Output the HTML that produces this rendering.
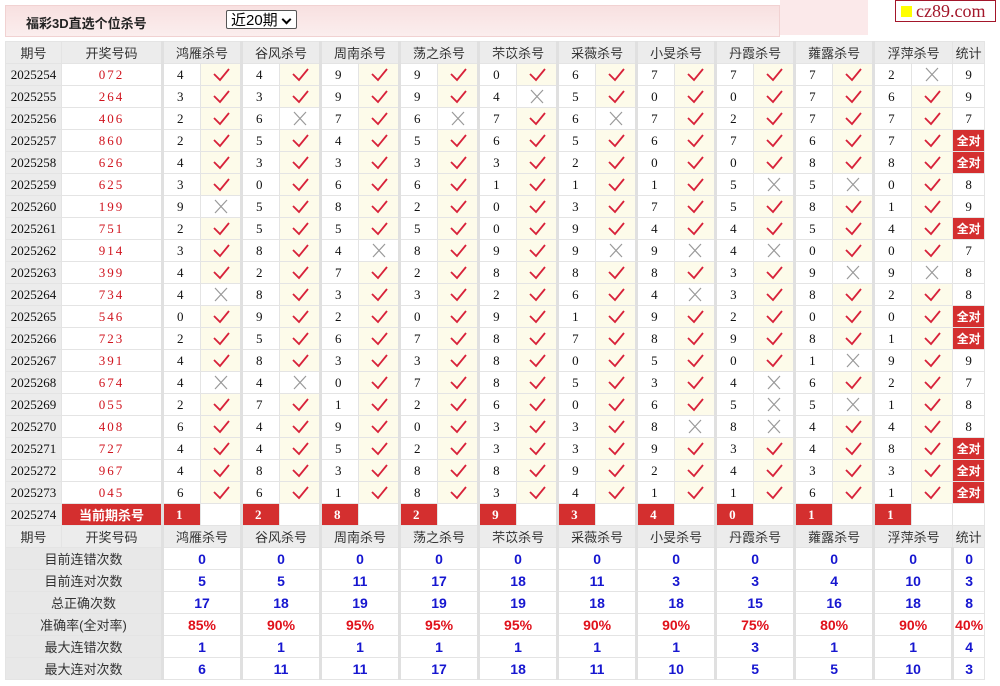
<!DOCTYPE html>
<html><head><meta charset="utf-8">
<style>
body{margin:0;background:#fff;width:1000px;height:686px;overflow:hidden;font-family:"Liberation Serif","Noto Serif CJK SC",serif;}
.top{position:absolute;left:5px;top:5px;width:773px;height:30px;background:linear-gradient(#f8e0e0,#fbeeee);border:1px solid #f1d2d2;}
.top .t{position:absolute;left:20px;top:7px;font:bold 13px "Liberation Sans","Noto Sans CJK SC",sans-serif;color:#222;}
.sel{position:absolute;left:220px;top:4px;height:19px;border:1px solid #555;background:#fff;font:15px "Liberation Sans","Noto Sans CJK SC",sans-serif;line-height:19px;padding-left:4px;box-sizing:border-box;width:71px;border-radius:2px}
.sel:after{content:"";position:absolute;right:6px;top:5px;width:5px;height:5px;border-right:2px solid #000;border-bottom:2px solid #000;transform:rotate(45deg)}
.logo{position:absolute;left:895px;top:0;width:101px;height:22px;border:1px solid #a3162a;background:#fff;color:#a3162a;font:18px "Liberation Serif",serif;line-height:21px;box-sizing:border-box;padding-left:20px;white-space:nowrap;overflow:hidden}
.logo:before{content:"";position:absolute;left:5px;top:5px;width:11px;height:11px;background:#ff0}
.pinkr{position:absolute;left:780px;top:0;width:88px;height:35px;background:#fbe9ea}
table{position:absolute;left:5px;top:41px;border-collapse:collapse;table-layout:fixed;width:979px}
td{height:21px;border:1px solid #e4e4e4;padding:0;font-size:13px;color:#111;white-space:nowrap;overflow:hidden}
.h{background:#ececec;text-align:center;font-family:"Liberation Sans","Noto Sans CJK SC",sans-serif;color:#333}
.q{background:#ececec;text-align:center;font-size:13px}
.k{text-align:center;color:#d0141e;letter-spacing:2px}
.n{border-left:3px solid #e0e0e0;padding-left:13px}
.v{background:#fdfbea;text-align:center}
.x{text-align:center}
td svg{display:block;margin:0 auto;width:20px;height:16px}
.s{text-align:center}
.b{background:#d42f2f;color:#fff;font-weight:bold;text-align:left;padding-left:12px}
.bb{background:#d42f2f;color:#fff;font:bold 13px "Liberation Sans","Noto Sans CJK SC",sans-serif;text-align:center}
.qa{background:#d42f2f;color:#fff;font:bold 12px "Liberation Sans","Noto Sans CJK SC",sans-serif;text-align:center}
.L{background:#e8e8e8;text-align:center;font-family:"Liberation Sans","Noto Sans CJK SC",sans-serif;color:#333}
.B{text-align:center;color:#1616d0;font:bold 14px "Liberation Sans",sans-serif;border-left:3px solid #e0e0e0}
.R{text-align:center;color:#e0101a;font:bold 14px "Liberation Sans",sans-serif;border-left:3px solid #e0e0e0}
.hg{border-left:3px solid #e0e0e0}
</style></head><body>
<svg width="0" height="0" style="position:absolute"><defs>
<symbol id="c" viewBox="0 0 20 16"><path d="M3 7 L9 13 L18 2" fill="none" stroke="#d8223a" stroke-width="1.8"/></symbol>
<symbol id="w" viewBox="0 0 20 16"><path d="M4 1 L16 14 M16 1 L4 14" fill="none" stroke="#999" stroke-width="1.2"/></symbol>
</defs></svg>
<div class="top"><span class="t">福彩3D直选个位杀号</span><div class="sel">近20期</div></div>
<div class="pinkr"></div>
<div class="logo">cz89.com</div>
<table>
<colgroup><col style="width:56px"><col style="width:101px">
<col style="width:38px"><col style="width:41px"><col style="width:38px"><col style="width:41px"><col style="width:38px"><col style="width:41px"><col style="width:38px"><col style="width:41px"><col style="width:38px"><col style="width:41px"><col style="width:38px"><col style="width:41px"><col style="width:38px"><col style="width:41px"><col style="width:38px"><col style="width:41px"><col style="width:38px"><col style="width:41px"><col style="width:38px"><col style="width:41px"><col style="width:32px"></colgroup>
<tr><td class="h">期号</td><td class="h">开奖号码</td><td class="h hg" colspan="2">鸿雁杀号</td><td class="h hg" colspan="2">谷风杀号</td><td class="h hg" colspan="2">周南杀号</td><td class="h hg" colspan="2">荡之杀号</td><td class="h hg" colspan="2">芣苡杀号</td><td class="h hg" colspan="2">采薇杀号</td><td class="h hg" colspan="2">小旻杀号</td><td class="h hg" colspan="2">丹霞杀号</td><td class="h hg" colspan="2">蕹露杀号</td><td class="h hg" colspan="2">浮萍杀号</td><td class="h">统计</td></tr>
<tr><td class="q">2025254</td><td class="k">072</td><td class="n">4</td><td class="v"><svg><use href="#c"/></svg></td><td class="n">4</td><td class="v"><svg><use href="#c"/></svg></td><td class="n">9</td><td class="v"><svg><use href="#c"/></svg></td><td class="n">9</td><td class="v"><svg><use href="#c"/></svg></td><td class="n">0</td><td class="v"><svg><use href="#c"/></svg></td><td class="n">6</td><td class="v"><svg><use href="#c"/></svg></td><td class="n">7</td><td class="v"><svg><use href="#c"/></svg></td><td class="n">7</td><td class="v"><svg><use href="#c"/></svg></td><td class="n">7</td><td class="v"><svg><use href="#c"/></svg></td><td class="n">2</td><td class="x"><svg><use href="#w"/></svg></td><td class="s">9</td></tr>
<tr><td class="q">2025255</td><td class="k">264</td><td class="n">3</td><td class="v"><svg><use href="#c"/></svg></td><td class="n">3</td><td class="v"><svg><use href="#c"/></svg></td><td class="n">9</td><td class="v"><svg><use href="#c"/></svg></td><td class="n">9</td><td class="v"><svg><use href="#c"/></svg></td><td class="n">4</td><td class="x"><svg><use href="#w"/></svg></td><td class="n">5</td><td class="v"><svg><use href="#c"/></svg></td><td class="n">0</td><td class="v"><svg><use href="#c"/></svg></td><td class="n">0</td><td class="v"><svg><use href="#c"/></svg></td><td class="n">7</td><td class="v"><svg><use href="#c"/></svg></td><td class="n">6</td><td class="v"><svg><use href="#c"/></svg></td><td class="s">9</td></tr>
<tr><td class="q">2025256</td><td class="k">406</td><td class="n">2</td><td class="v"><svg><use href="#c"/></svg></td><td class="n">6</td><td class="x"><svg><use href="#w"/></svg></td><td class="n">7</td><td class="v"><svg><use href="#c"/></svg></td><td class="n">6</td><td class="x"><svg><use href="#w"/></svg></td><td class="n">7</td><td class="v"><svg><use href="#c"/></svg></td><td class="n">6</td><td class="x"><svg><use href="#w"/></svg></td><td class="n">7</td><td class="v"><svg><use href="#c"/></svg></td><td class="n">2</td><td class="v"><svg><use href="#c"/></svg></td><td class="n">7</td><td class="v"><svg><use href="#c"/></svg></td><td class="n">7</td><td class="v"><svg><use href="#c"/></svg></td><td class="s">7</td></tr>
<tr><td class="q">2025257</td><td class="k">860</td><td class="n">2</td><td class="v"><svg><use href="#c"/></svg></td><td class="n">5</td><td class="v"><svg><use href="#c"/></svg></td><td class="n">4</td><td class="v"><svg><use href="#c"/></svg></td><td class="n">5</td><td class="v"><svg><use href="#c"/></svg></td><td class="n">6</td><td class="v"><svg><use href="#c"/></svg></td><td class="n">5</td><td class="v"><svg><use href="#c"/></svg></td><td class="n">6</td><td class="v"><svg><use href="#c"/></svg></td><td class="n">7</td><td class="v"><svg><use href="#c"/></svg></td><td class="n">6</td><td class="v"><svg><use href="#c"/></svg></td><td class="n">7</td><td class="v"><svg><use href="#c"/></svg></td><td class="qa">全对</td></tr>
<tr><td class="q">2025258</td><td class="k">626</td><td class="n">4</td><td class="v"><svg><use href="#c"/></svg></td><td class="n">3</td><td class="v"><svg><use href="#c"/></svg></td><td class="n">3</td><td class="v"><svg><use href="#c"/></svg></td><td class="n">3</td><td class="v"><svg><use href="#c"/></svg></td><td class="n">3</td><td class="v"><svg><use href="#c"/></svg></td><td class="n">2</td><td class="v"><svg><use href="#c"/></svg></td><td class="n">0</td><td class="v"><svg><use href="#c"/></svg></td><td class="n">0</td><td class="v"><svg><use href="#c"/></svg></td><td class="n">8</td><td class="v"><svg><use href="#c"/></svg></td><td class="n">8</td><td class="v"><svg><use href="#c"/></svg></td><td class="qa">全对</td></tr>
<tr><td class="q">2025259</td><td class="k">625</td><td class="n">3</td><td class="v"><svg><use href="#c"/></svg></td><td class="n">0</td><td class="v"><svg><use href="#c"/></svg></td><td class="n">6</td><td class="v"><svg><use href="#c"/></svg></td><td class="n">6</td><td class="v"><svg><use href="#c"/></svg></td><td class="n">1</td><td class="v"><svg><use href="#c"/></svg></td><td class="n">1</td><td class="v"><svg><use href="#c"/></svg></td><td class="n">1</td><td class="v"><svg><use href="#c"/></svg></td><td class="n">5</td><td class="x"><svg><use href="#w"/></svg></td><td class="n">5</td><td class="x"><svg><use href="#w"/></svg></td><td class="n">0</td><td class="v"><svg><use href="#c"/></svg></td><td class="s">8</td></tr>
<tr><td class="q">2025260</td><td class="k">199</td><td class="n">9</td><td class="x"><svg><use href="#w"/></svg></td><td class="n">5</td><td class="v"><svg><use href="#c"/></svg></td><td class="n">8</td><td class="v"><svg><use href="#c"/></svg></td><td class="n">2</td><td class="v"><svg><use href="#c"/></svg></td><td class="n">0</td><td class="v"><svg><use href="#c"/></svg></td><td class="n">3</td><td class="v"><svg><use href="#c"/></svg></td><td class="n">7</td><td class="v"><svg><use href="#c"/></svg></td><td class="n">5</td><td class="v"><svg><use href="#c"/></svg></td><td class="n">8</td><td class="v"><svg><use href="#c"/></svg></td><td class="n">1</td><td class="v"><svg><use href="#c"/></svg></td><td class="s">9</td></tr>
<tr><td class="q">2025261</td><td class="k">751</td><td class="n">2</td><td class="v"><svg><use href="#c"/></svg></td><td class="n">5</td><td class="v"><svg><use href="#c"/></svg></td><td class="n">5</td><td class="v"><svg><use href="#c"/></svg></td><td class="n">5</td><td class="v"><svg><use href="#c"/></svg></td><td class="n">0</td><td class="v"><svg><use href="#c"/></svg></td><td class="n">9</td><td class="v"><svg><use href="#c"/></svg></td><td class="n">4</td><td class="v"><svg><use href="#c"/></svg></td><td class="n">4</td><td class="v"><svg><use href="#c"/></svg></td><td class="n">5</td><td class="v"><svg><use href="#c"/></svg></td><td class="n">4</td><td class="v"><svg><use href="#c"/></svg></td><td class="qa">全对</td></tr>
<tr><td class="q">2025262</td><td class="k">914</td><td class="n">3</td><td class="v"><svg><use href="#c"/></svg></td><td class="n">8</td><td class="v"><svg><use href="#c"/></svg></td><td class="n">4</td><td class="x"><svg><use href="#w"/></svg></td><td class="n">8</td><td class="v"><svg><use href="#c"/></svg></td><td class="n">9</td><td class="v"><svg><use href="#c"/></svg></td><td class="n">9</td><td class="x"><svg><use href="#w"/></svg></td><td class="n">9</td><td class="x"><svg><use href="#w"/></svg></td><td class="n">4</td><td class="x"><svg><use href="#w"/></svg></td><td class="n">0</td><td class="v"><svg><use href="#c"/></svg></td><td class="n">0</td><td class="v"><svg><use href="#c"/></svg></td><td class="s">7</td></tr>
<tr><td class="q">2025263</td><td class="k">399</td><td class="n">4</td><td class="v"><svg><use href="#c"/></svg></td><td class="n">2</td><td class="v"><svg><use href="#c"/></svg></td><td class="n">7</td><td class="v"><svg><use href="#c"/></svg></td><td class="n">2</td><td class="v"><svg><use href="#c"/></svg></td><td class="n">8</td><td class="v"><svg><use href="#c"/></svg></td><td class="n">8</td><td class="v"><svg><use href="#c"/></svg></td><td class="n">8</td><td class="v"><svg><use href="#c"/></svg></td><td class="n">3</td><td class="v"><svg><use href="#c"/></svg></td><td class="n">9</td><td class="x"><svg><use href="#w"/></svg></td><td class="n">9</td><td class="x"><svg><use href="#w"/></svg></td><td class="s">8</td></tr>
<tr><td class="q">2025264</td><td class="k">734</td><td class="n">4</td><td class="x"><svg><use href="#w"/></svg></td><td class="n">8</td><td class="v"><svg><use href="#c"/></svg></td><td class="n">3</td><td class="v"><svg><use href="#c"/></svg></td><td class="n">3</td><td class="v"><svg><use href="#c"/></svg></td><td class="n">2</td><td class="v"><svg><use href="#c"/></svg></td><td class="n">6</td><td class="v"><svg><use href="#c"/></svg></td><td class="n">4</td><td class="x"><svg><use href="#w"/></svg></td><td class="n">3</td><td class="v"><svg><use href="#c"/></svg></td><td class="n">8</td><td class="v"><svg><use href="#c"/></svg></td><td class="n">2</td><td class="v"><svg><use href="#c"/></svg></td><td class="s">8</td></tr>
<tr><td class="q">2025265</td><td class="k">546</td><td class="n">0</td><td class="v"><svg><use href="#c"/></svg></td><td class="n">9</td><td class="v"><svg><use href="#c"/></svg></td><td class="n">2</td><td class="v"><svg><use href="#c"/></svg></td><td class="n">0</td><td class="v"><svg><use href="#c"/></svg></td><td class="n">9</td><td class="v"><svg><use href="#c"/></svg></td><td class="n">1</td><td class="v"><svg><use href="#c"/></svg></td><td class="n">9</td><td class="v"><svg><use href="#c"/></svg></td><td class="n">2</td><td class="v"><svg><use href="#c"/></svg></td><td class="n">0</td><td class="v"><svg><use href="#c"/></svg></td><td class="n">0</td><td class="v"><svg><use href="#c"/></svg></td><td class="qa">全对</td></tr>
<tr><td class="q">2025266</td><td class="k">723</td><td class="n">2</td><td class="v"><svg><use href="#c"/></svg></td><td class="n">5</td><td class="v"><svg><use href="#c"/></svg></td><td class="n">6</td><td class="v"><svg><use href="#c"/></svg></td><td class="n">7</td><td class="v"><svg><use href="#c"/></svg></td><td class="n">8</td><td class="v"><svg><use href="#c"/></svg></td><td class="n">7</td><td class="v"><svg><use href="#c"/></svg></td><td class="n">8</td><td class="v"><svg><use href="#c"/></svg></td><td class="n">9</td><td class="v"><svg><use href="#c"/></svg></td><td class="n">8</td><td class="v"><svg><use href="#c"/></svg></td><td class="n">1</td><td class="v"><svg><use href="#c"/></svg></td><td class="qa">全对</td></tr>
<tr><td class="q">2025267</td><td class="k">391</td><td class="n">4</td><td class="v"><svg><use href="#c"/></svg></td><td class="n">8</td><td class="v"><svg><use href="#c"/></svg></td><td class="n">3</td><td class="v"><svg><use href="#c"/></svg></td><td class="n">3</td><td class="v"><svg><use href="#c"/></svg></td><td class="n">8</td><td class="v"><svg><use href="#c"/></svg></td><td class="n">0</td><td class="v"><svg><use href="#c"/></svg></td><td class="n">5</td><td class="v"><svg><use href="#c"/></svg></td><td class="n">0</td><td class="v"><svg><use href="#c"/></svg></td><td class="n">1</td><td class="x"><svg><use href="#w"/></svg></td><td class="n">9</td><td class="v"><svg><use href="#c"/></svg></td><td class="s">9</td></tr>
<tr><td class="q">2025268</td><td class="k">674</td><td class="n">4</td><td class="x"><svg><use href="#w"/></svg></td><td class="n">4</td><td class="x"><svg><use href="#w"/></svg></td><td class="n">0</td><td class="v"><svg><use href="#c"/></svg></td><td class="n">7</td><td class="v"><svg><use href="#c"/></svg></td><td class="n">8</td><td class="v"><svg><use href="#c"/></svg></td><td class="n">5</td><td class="v"><svg><use href="#c"/></svg></td><td class="n">3</td><td class="v"><svg><use href="#c"/></svg></td><td class="n">4</td><td class="x"><svg><use href="#w"/></svg></td><td class="n">6</td><td class="v"><svg><use href="#c"/></svg></td><td class="n">2</td><td class="v"><svg><use href="#c"/></svg></td><td class="s">7</td></tr>
<tr><td class="q">2025269</td><td class="k">055</td><td class="n">2</td><td class="v"><svg><use href="#c"/></svg></td><td class="n">7</td><td class="v"><svg><use href="#c"/></svg></td><td class="n">1</td><td class="v"><svg><use href="#c"/></svg></td><td class="n">2</td><td class="v"><svg><use href="#c"/></svg></td><td class="n">6</td><td class="v"><svg><use href="#c"/></svg></td><td class="n">0</td><td class="v"><svg><use href="#c"/></svg></td><td class="n">6</td><td class="v"><svg><use href="#c"/></svg></td><td class="n">5</td><td class="x"><svg><use href="#w"/></svg></td><td class="n">5</td><td class="x"><svg><use href="#w"/></svg></td><td class="n">1</td><td class="v"><svg><use href="#c"/></svg></td><td class="s">8</td></tr>
<tr><td class="q">2025270</td><td class="k">408</td><td class="n">6</td><td class="v"><svg><use href="#c"/></svg></td><td class="n">4</td><td class="v"><svg><use href="#c"/></svg></td><td class="n">9</td><td class="v"><svg><use href="#c"/></svg></td><td class="n">0</td><td class="v"><svg><use href="#c"/></svg></td><td class="n">3</td><td class="v"><svg><use href="#c"/></svg></td><td class="n">3</td><td class="v"><svg><use href="#c"/></svg></td><td class="n">8</td><td class="x"><svg><use href="#w"/></svg></td><td class="n">8</td><td class="x"><svg><use href="#w"/></svg></td><td class="n">4</td><td class="v"><svg><use href="#c"/></svg></td><td class="n">4</td><td class="v"><svg><use href="#c"/></svg></td><td class="s">8</td></tr>
<tr><td class="q">2025271</td><td class="k">727</td><td class="n">4</td><td class="v"><svg><use href="#c"/></svg></td><td class="n">4</td><td class="v"><svg><use href="#c"/></svg></td><td class="n">5</td><td class="v"><svg><use href="#c"/></svg></td><td class="n">2</td><td class="v"><svg><use href="#c"/></svg></td><td class="n">3</td><td class="v"><svg><use href="#c"/></svg></td><td class="n">3</td><td class="v"><svg><use href="#c"/></svg></td><td class="n">9</td><td class="v"><svg><use href="#c"/></svg></td><td class="n">3</td><td class="v"><svg><use href="#c"/></svg></td><td class="n">4</td><td class="v"><svg><use href="#c"/></svg></td><td class="n">8</td><td class="v"><svg><use href="#c"/></svg></td><td class="qa">全对</td></tr>
<tr><td class="q">2025272</td><td class="k">967</td><td class="n">4</td><td class="v"><svg><use href="#c"/></svg></td><td class="n">8</td><td class="v"><svg><use href="#c"/></svg></td><td class="n">3</td><td class="v"><svg><use href="#c"/></svg></td><td class="n">8</td><td class="v"><svg><use href="#c"/></svg></td><td class="n">8</td><td class="v"><svg><use href="#c"/></svg></td><td class="n">9</td><td class="v"><svg><use href="#c"/></svg></td><td class="n">2</td><td class="v"><svg><use href="#c"/></svg></td><td class="n">4</td><td class="v"><svg><use href="#c"/></svg></td><td class="n">3</td><td class="v"><svg><use href="#c"/></svg></td><td class="n">3</td><td class="v"><svg><use href="#c"/></svg></td><td class="qa">全对</td></tr>
<tr><td class="q">2025273</td><td class="k">045</td><td class="n">6</td><td class="v"><svg><use href="#c"/></svg></td><td class="n">6</td><td class="v"><svg><use href="#c"/></svg></td><td class="n">1</td><td class="v"><svg><use href="#c"/></svg></td><td class="n">8</td><td class="v"><svg><use href="#c"/></svg></td><td class="n">3</td><td class="v"><svg><use href="#c"/></svg></td><td class="n">4</td><td class="v"><svg><use href="#c"/></svg></td><td class="n">1</td><td class="v"><svg><use href="#c"/></svg></td><td class="n">1</td><td class="v"><svg><use href="#c"/></svg></td><td class="n">6</td><td class="v"><svg><use href="#c"/></svg></td><td class="n">1</td><td class="v"><svg><use href="#c"/></svg></td><td class="qa">全对</td></tr>
<tr><td class="q">2025274</td><td class="bb">当前期杀号</td><td class="b hg">1</td><td></td><td class="b hg">2</td><td></td><td class="b hg">8</td><td></td><td class="b hg">2</td><td></td><td class="b hg">9</td><td></td><td class="b hg">3</td><td></td><td class="b hg">4</td><td></td><td class="b hg">0</td><td></td><td class="b hg">1</td><td></td><td class="b hg">1</td><td></td><td></td></tr>
<tr><td class="h">期号</td><td class="h">开奖号码</td><td class="h hg" colspan="2">鸿雁杀号</td><td class="h hg" colspan="2">谷风杀号</td><td class="h hg" colspan="2">周南杀号</td><td class="h hg" colspan="2">荡之杀号</td><td class="h hg" colspan="2">芣苡杀号</td><td class="h hg" colspan="2">采薇杀号</td><td class="h hg" colspan="2">小旻杀号</td><td class="h hg" colspan="2">丹霞杀号</td><td class="h hg" colspan="2">蕹露杀号</td><td class="h hg" colspan="2">浮萍杀号</td><td class="h">统计</td></tr>
<tr><td class="L" colspan="2">目前连错次数</td><td class="B" colspan="2">0</td><td class="B" colspan="2">0</td><td class="B" colspan="2">0</td><td class="B" colspan="2">0</td><td class="B" colspan="2">0</td><td class="B" colspan="2">0</td><td class="B" colspan="2">0</td><td class="B" colspan="2">0</td><td class="B" colspan="2">0</td><td class="B" colspan="2">0</td><td class="B">0</td></tr>
<tr><td class="L" colspan="2">目前连对次数</td><td class="B" colspan="2">5</td><td class="B" colspan="2">5</td><td class="B" colspan="2">11</td><td class="B" colspan="2">17</td><td class="B" colspan="2">18</td><td class="B" colspan="2">11</td><td class="B" colspan="2">3</td><td class="B" colspan="2">3</td><td class="B" colspan="2">4</td><td class="B" colspan="2">10</td><td class="B">3</td></tr>
<tr><td class="L" colspan="2">总正确次数</td><td class="B" colspan="2">17</td><td class="B" colspan="2">18</td><td class="B" colspan="2">19</td><td class="B" colspan="2">19</td><td class="B" colspan="2">19</td><td class="B" colspan="2">18</td><td class="B" colspan="2">18</td><td class="B" colspan="2">15</td><td class="B" colspan="2">16</td><td class="B" colspan="2">18</td><td class="B">8</td></tr>
<tr><td class="L" colspan="2">准确率(全对率)</td><td class="R" colspan="2">85%</td><td class="R" colspan="2">90%</td><td class="R" colspan="2">95%</td><td class="R" colspan="2">95%</td><td class="R" colspan="2">95%</td><td class="R" colspan="2">90%</td><td class="R" colspan="2">90%</td><td class="R" colspan="2">75%</td><td class="R" colspan="2">80%</td><td class="R" colspan="2">90%</td><td class="R">40%</td></tr>
<tr><td class="L" colspan="2">最大连错次数</td><td class="B" colspan="2">1</td><td class="B" colspan="2">1</td><td class="B" colspan="2">1</td><td class="B" colspan="2">1</td><td class="B" colspan="2">1</td><td class="B" colspan="2">1</td><td class="B" colspan="2">1</td><td class="B" colspan="2">3</td><td class="B" colspan="2">1</td><td class="B" colspan="2">1</td><td class="B">4</td></tr>
<tr><td class="L" colspan="2">最大连对次数</td><td class="B" colspan="2">6</td><td class="B" colspan="2">11</td><td class="B" colspan="2">11</td><td class="B" colspan="2">17</td><td class="B" colspan="2">18</td><td class="B" colspan="2">11</td><td class="B" colspan="2">10</td><td class="B" colspan="2">5</td><td class="B" colspan="2">5</td><td class="B" colspan="2">10</td><td class="B">3</td></tr>
</table>
</body></html>
